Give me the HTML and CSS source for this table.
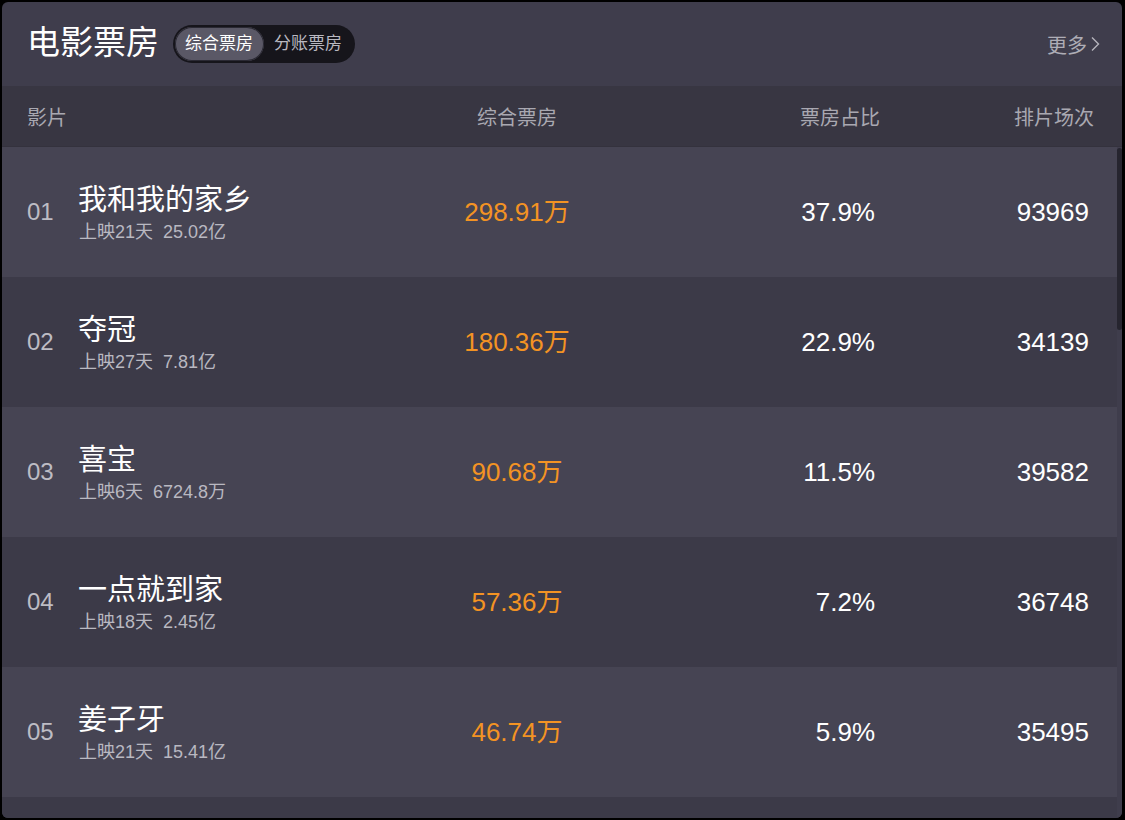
FILE: index.html
```html
<!DOCTYPE html>
<html lang="zh-CN">
<head>
<meta charset="utf-8">
<title>电影票房</title>
<link rel="stylesheet" href="styles.css">
</head>
<body>
<div class="panel">
  <div class="top">
    <h1 class="title">电影票房</h1>
    <div class="toggle">
      <span class="tab active">综合票房</span>
      <span class="tab">分账票房</span>
    </div>
    <a class="more">更多<svg class="chev" width="10" height="16" viewBox="0 0 10 16"><polyline points="2,1.5 8.5,8 2,14.5" fill="none" stroke="#b5b4bc" stroke-width="1.4"/></svg></a>
  </div>
  <div class="cols">
    <div class="c-film">影片</div>
    <div class="c-box">综合票房</div>
    <div class="c-pct">票房占比</div>
    <div class="c-ses">排片场次</div>
  </div>
  <div class="list">
    <div class="rows">
      <div class="row">
        <div class="film"><span class="idx">01</span><div class="info"><div class="name">我和我的家乡</div><div class="sub"><span>上映21天</span><span>25.02亿</span></div></div></div>
        <div class="box">298.91万</div><div class="pct">37.9%</div><div class="ses">93969</div>
      </div>
      <div class="row">
        <div class="film"><span class="idx">02</span><div class="info"><div class="name">夺冠</div><div class="sub"><span>上映27天</span><span>7.81亿</span></div></div></div>
        <div class="box">180.36万</div><div class="pct">22.9%</div><div class="ses">34139</div>
      </div>
      <div class="row">
        <div class="film"><span class="idx">03</span><div class="info"><div class="name">喜宝</div><div class="sub"><span>上映6天</span><span>6724.8万</span></div></div></div>
        <div class="box">90.68万</div><div class="pct">11.5%</div><div class="ses">39582</div>
      </div>
      <div class="row">
        <div class="film"><span class="idx">04</span><div class="info"><div class="name">一点就到家</div><div class="sub"><span>上映18天</span><span>2.45亿</span></div></div></div>
        <div class="box">57.36万</div><div class="pct">7.2%</div><div class="ses">36748</div>
      </div>
      <div class="row">
        <div class="film"><span class="idx">05</span><div class="info"><div class="name">姜子牙</div><div class="sub"><span>上映21天</span><span>15.41亿</span></div></div></div>
        <div class="box">46.74万</div><div class="pct">5.9%</div><div class="ses">35495</div>
      </div>
      <div class="row"></div>
    </div>
    <div class="scrollbar"><div class="thumb"></div></div>
  </div>
</div>
</body>
</html>
```

FILE: styles.css
```css
* { box-sizing: border-box; }
html, body { margin: 0; height: 100%; }
body {
  background: #000;
  padding: 2px 3px 2px 2px;
  font-family: "Liberation Sans", "Noto Sans CJK SC", sans-serif;
  color: #fff;
}
.panel {
  width: 1120px;
  height: 816px;
  background: #3f3d4c;
  border-radius: 6px;
  overflow: hidden;
  display: flex;
  flex-direction: column;
}
.top {
  height: 84px;
  flex: none;
  display: flex;
  align-items: center;
  padding: 0 22px 0 25px;
}
.title {
  margin: 0 0 2px;
  font-size: 33px;
  font-weight: normal;
  color: #fff;
  line-height: 40px;
}
.toggle {
  margin-left: 14px;
  height: 38px;
  padding: 2px;
  border-radius: 19px;
  background: #16151b;
  display: flex;
  align-items: center;
}
.tab {
  height: 34px;
  line-height: 34px;
  padding: 0 11px 0 10px;
  border-radius: 17px;
  font-size: 17px;
  color: #b9b8c0;
}
.tab.active {
  background: #5a5866;
  color: #fff;
  box-shadow: inset 0 0 0 1px #2a2933;
}
.more {
  margin-left: auto;
  font-size: 20px;
  color: #aeadb6;
  display: flex;
  align-items: center;
  gap: 3px;
}
.chev { display: block; }
.cols {
  height: 61px;
  flex: none;
  background: #383642;
  display: grid;
  grid-template-columns: 390px 200px 1fr 214px;
  align-items: center;
  padding: 0 28px 0 25px;
  font-size: 20px;
  color: #a9a8b1;
  border-bottom: 1px solid #34323d;
}
.c-box { text-align: center; }
.c-pct, .c-ses { text-align: right; }
.list {
  flex: 1;
  min-height: 0;
  display: flex;
}
.rows {
  flex: 1;
  min-width: 0;
  overflow: hidden;
}
.scrollbar {
  width: 5px;
  flex: none;
  background: #3f3d4c;
  padding-top: 1px;
}
.thumb {
  height: 182px;
  background: #26252f;
  border-radius: 3px;
}
.row {
  height: 130px;
  display: grid;
  grid-template-columns: 390px 200px 1fr 214px;
  align-items: center;
  padding: 0 28px 0 25px;
  background: #464453;
}
.row:nth-child(even) { background: #3c3a48; }
.film {
  display: flex;
  align-items: center;
}
.idx {
  width: 52px;
  flex: none;
  font-size: 24px;
  color: #bdbcc4;
}
.info { padding-top: 6px; }
.name {
  font-size: 29px;
  line-height: 34px;
  color: #fff;
  white-space: nowrap;
  margin-left: -1px;
}
.sub {
  font-size: 18px;
  line-height: 30px;
  color: #b9b8c1;
  display: flex;
  gap: 10px;
}
.box, .pct, .ses {
  font-size: 26px;
  line-height: 30px;
}
.box {
  text-align: center;
  color: #f39323;
}
.pct, .ses {
  text-align: right;
  color: #fff;
}
```
